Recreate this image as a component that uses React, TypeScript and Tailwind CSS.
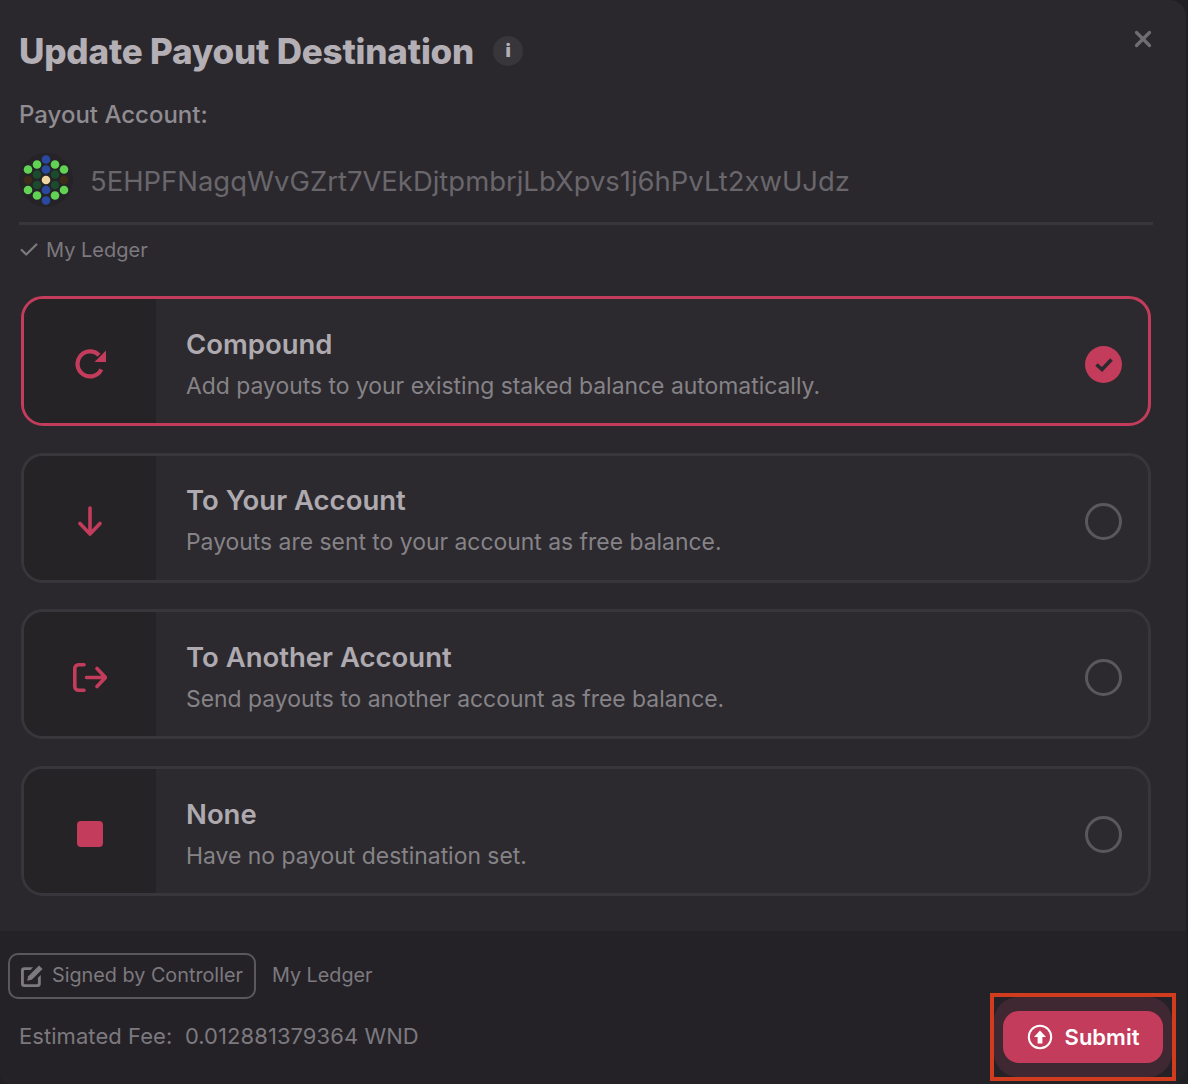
import { Check, X } from "lucide-react";
import type { ReactNode } from "react";

const RED = "#c43c5c";

// polkadot style identicon, offsets from the centre
const dots: [number, number, string][] = [
  [0, -20.5, "#2a4aa0"],
  [0, -10.5, "#2a4aa0"],
  [0, 10, "#2a4aa0"],
  [0, 20.5, "#2a4aa0"],
  [-18, -10.5, "#62d254"],
  [-9, -15.5, "#62d254"],
  [9, -15.5, "#62d254"],
  [18, -10.5, "#62d254"],
  [-18, 10, "#62d254"],
  [-9, 15.5, "#62d254"],
  [9, 15.5, "#62d254"],
  [18, 10, "#62d254"],
  [-9, -5.5, "#1c4a2c"],
  [9, -5.5, "#1c4a2c"],
  [-9, 5, "#1c4a2c"],
  [9, 5, "#1c4a2c"],
  [-18, 0, "#3d2a18"],
  [18, 0, "#3d2a18"],
  [0, 0, "#eed6a0"],
];

function Identicon() {
  return (
    <svg width="54" height="54" viewBox="-27 -27 54 54" className="shrink-0">
      <circle r="27" fill="#252327" />
      {dots.map(([x, y, fill]) => (
        <circle key={`${x}-${y}`} cx={x} cy={y} r="4.3" fill={fill} />
      ))}
    </svg>
  );
}

function RedoIcon() {
  return (
    <svg width="32" height="30" viewBox="0 0 32 30" fill="none">
      <path d="M25 6.2A12.5 12.5 0 1 0 27.3 20.3" stroke={RED} strokeWidth="4.2" />
      <path d="M32 1.5V13H20.5z" fill={RED} />
    </svg>
  );
}

function DownIcon() {
  return (
    <svg width="28" height="32" viewBox="0 0 28 32" fill="none" stroke={RED} strokeWidth="3.6" strokeLinecap="round" strokeLinejoin="round">
      <path d="M14 3v25M4 18.5 14 29l10-10.5" />
    </svg>
  );
}

function ExitIcon() {
  return (
    <svg width="34" height="29" viewBox="0 0 34 29" fill="none" stroke={RED} strokeWidth="3.6" strokeLinecap="round" strokeLinejoin="round">
      <path d="M11 1.8H5.5a3.7 3.7 0 0 0-3.7 3.7v18a3.7 3.7 0 0 0 3.7 3.7H11" />
      <path d="M13.5 14.5H32M24 5.5l8.5 9-8.5 9" />
    </svg>
  );
}

type Option = { title: string; text: string; icon: ReactNode; active?: boolean };

const options: Option[] = [
  { title: "Compound", text: "Add payouts to your existing staked balance automatically.", icon: <RedoIcon />, active: true },
  { title: "To Your Account", text: "Payouts are sent to your account as free balance.", icon: <DownIcon /> },
  { title: "To Another Account", text: "Send payouts to another account as free balance.", icon: <ExitIcon /> },
  { title: "None", text: "Have no payout destination set.", icon: <div className="h-[26px] w-[26px] rounded bg-[#c43c5c]" /> },
];

function OptionCard({ title, text, icon, active }: Option) {
  return (
    <div className={`flex h-[130px] overflow-hidden rounded-[22px] border-[3px] bg-[#2c2a2e] ${active ? "border-[#c43c5c]" : "border-[#38353b]"}`}>
      <div className="flex w-[132px] shrink-0 items-center justify-center bg-[#262327] pt-[6px]">{icon}</div>
      <div className="flex flex-1 items-center justify-between pl-[30px] pr-[26px]">
        <div className="pt-[4px]">
          <h3 className="text-[27.5px] leading-[36px] font-semibold text-[#aeaab0]">{title}</h3>
          <p className="mt-[9px] text-[22.9px] leading-[30px] text-[#868388]">{text}</p>
        </div>
        {active ? (
          <div className="mt-[7px] flex h-[37px] w-[37px] items-center justify-center rounded-full bg-[#c43c5c]">
            <svg width="18" height="14" viewBox="0 0 18 14" fill="none" stroke="#2c2a2e" strokeWidth="3.6">
              <path d="M1.5 6.5 7 11.5 16.5 1.5" />
            </svg>
          </div>
        ) : (
          <div className="mt-[7px] h-[37px] w-[37px] rounded-full border-[3px] border-[#5a585c]" />
        )}
      </div>
    </div>
  );
}

export default function App() {
  return (
    <div className="h-[1084px] w-[1188px] overflow-hidden bg-[#211f23] pr-[2px] font-['Inter',sans-serif]">
      <div className="flex h-full flex-col overflow-hidden rounded-tr-[16px] rounded-br-[16px] rounded-bl-[10px] bg-[#2b282d]">
        <div className="relative flex-1 pl-[19px] pr-[33px] pt-[28px]">
          <button type="button" className="absolute right-[30px] top-[26px] text-[#6f6c72]">
            <X size={26} strokeWidth={3} />
          </button>
          <div className="flex items-center gap-[19px]">
            <h2 className="text-[35px] leading-[46px] font-extrabold tracking-[-0.2px] text-[#b3afb5]">Update Payout Destination</h2>
            <span className="flex h-[30px] w-[30px] items-center justify-center rounded-full bg-[#38353b]">
              <span className="text-[18px] leading-none font-black text-[#b3afb5]">i</span>
            </span>
          </div>
          <p className="mt-[25px] text-[24px] leading-[32px] font-medium text-[#8f8c92]">Payout Account:</p>
          <div className="mt-[22px] flex items-center gap-[17px] border-b-[3px] border-[#38353b] pb-[15px]">
            <Identicon />
            <span className="pt-[2px] text-[27.45px] leading-[52px] text-[#69666c]">5EHPFNagqWvGZrt7VEkDjtpmbrjLbXpvs1j6hPvLt2xwUJdz</span>
          </div>
          <div className="mt-[10px] flex items-center gap-[6px] text-[20px] leading-[30px] text-[#7c797f]">
            <Check size={22} strokeWidth={2.4} className="-ml-[1px]" />
            My Ledger
          </div>
          <div className="ml-[2px] mr-[2px] mt-[31px] flex flex-col gap-[26.7px]">
            {options.map((o) => (
              <OptionCard key={o.title} {...o} />
            ))}
          </div>
        </div>
        <div className="flex h-[153px] items-end justify-between bg-[#252227] pb-[3px] pl-[8px] pr-[10px]">
          <div className="mb-[30px]">
            <div className="flex items-center gap-[16px] text-[19.8px] text-[#7c797f]">
              <div className="flex h-[46px] items-center gap-[9px] rounded-[10px] border-2 border-[#5a585c] pl-[11px] pr-[11px]">
                <svg width="22" height="22" viewBox="1 1 20 20" fill="#7c797f">
                  <path d="M4 3h8l-2.4 2.6H4.4a.8.8 0 0 0-.8.8v11.2c0 .4.4.8.8.8h11.2c.4 0 .8-.4.8-.8v-5l2.6-2.6V18a3 3 0 0 1-3 3H4a3 3 0 0 1-3-3V6a3 3 0 0 1 3-3z" />
                  <path d="M17.4 1.4l3.2 3.2-9.8 9.8-4.2 1 1-4.2z" />
                </svg>
                Signed by Controller
              </div>
              My Ledger
            </div>
            <p className="mt-[22px] pl-[11px] text-[22px] leading-[30px] tracking-[0.06px] whitespace-pre text-[#7c797f]">Estimated Fee:  0.012881379364 WND</p>
          </div>
          <div className="flex h-[88px] w-[186px] items-center justify-center border-4 border-[#d23c1e]">
            <div className="flex h-[80px] w-[178px] items-center justify-center rounded-[24px] bg-[#402832]">
              <button type="button" className="flex h-[52px] w-[160px] items-center justify-center gap-[12px] rounded-[16px] bg-[#c43c5c] text-[22px] font-semibold text-white">
                <svg width="26" height="26" viewBox="0 0 26 26">
                  <circle cx="13" cy="13" r="11.2" fill="none" stroke="white" strokeWidth="2" />
                  <path d="M13 6.5l6 6.5h-3.6v6.5h-4.8V13H7z" fill="white" />
                </svg>
                Submit
              </button>
            </div>
          </div>
        </div>
      </div>
    </div>
  );
}
